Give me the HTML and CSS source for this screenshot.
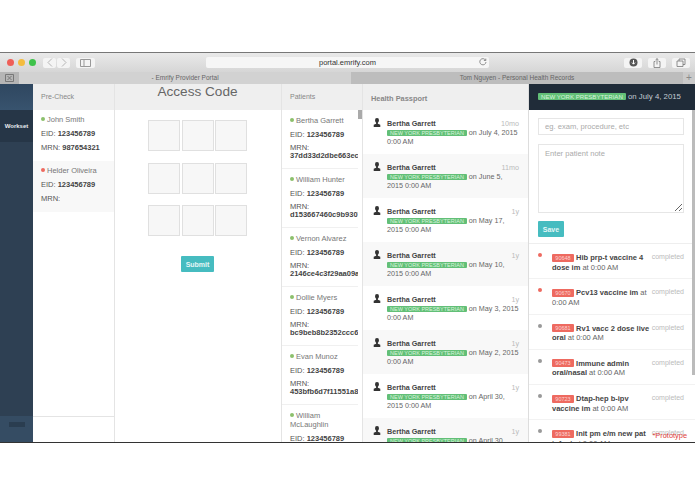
FILE: index.html
```html
<!DOCTYPE html>
<html lang="en">
<head>
  <meta charset="UTF-8" />
  <title>Emrify Provider Portal</title>
  <link rel="stylesheet" href="styles.css">
</head>
<body>
  <div class="window">
    <div class="toolbar">
      <div class="lights">
        <span class="light red"></span>
        <span class="light yellow"></span>
        <span class="light green"></span>
      </div>
      <div class="nav-btns">
        <span class="tool-btn nav-btn">
          <svg width="6" height="9" viewBox="0 0 6 9"><path d="M5 .5 1 4.500 5 8.500" fill="none" stroke="#b5b5b5"/></svg>
        </span>
        <span class="tool-btn nav-btn">
          <svg width="6" height="9" viewBox="0 0 6 9"><path d="M1 .5 5 4.500 1 8.500" fill="none" stroke="#b5b5b5"/></svg>
        </span>
      </div>
      <span class="tool-btn side-btn">
        <svg width="11" height="8" viewBox="0 0 11 8"><path d="M.5.500h10v7H.5zM4 .5v7" fill="none" stroke="#999"/></svg>
      </span>
      <div class="address">
        <span class="url">portal.emrify.com</span>
        <svg class="reload" width="8" height="8" viewBox="0 0 8 8"><path d="M6.600 2.200A3.100 3.100 0 1 0 7 4M6.800.6v1.900H4.900" fill="none" stroke="#777" stroke-width=".8"/></svg>
      </div>
      <div class="tool-right">
        <span class="tool-btn right-btn">
          <svg width="9" height="9" viewBox="0 0 9 9"><circle cx="4.500" cy="4.500" r="4" fill="#555"/><path d="M4.500 2v4M3 4.600l1.500 1.600L6 4.600" fill="none" stroke="#fff"/></svg>
        </span>
        <span class="tool-btn right-btn">
          <svg width="8" height="10" viewBox="0 0 8 10"><path d="M2.300 3.500H1v6h6v-6H5.700M4 6.500V.7M2.500 2 4 .6 5.500 2" fill="none" stroke="#777" stroke-width=".8"/></svg>
        </span>
        <span class="tool-btn right-btn">
          <svg width="10" height="9" viewBox="0 0 10 9"><path d="M1 3h6v5.500H1zM3 3V1h6v5.500H7" fill="none" stroke="#777" stroke-width=".8"/></svg>
        </span>
      </div>
    </div>

    <div class="tabbar">
      <span class="tab-icon">
        <svg width="9" height="8" viewBox="0 0 9 8"><path d="M.5.500h8v7h-8zM2.500 2l4 4M6.500 2l-4 4" fill="none" stroke="#777"/></svg>
      </span>
      <span class="tab tab-active">- Emrify Provider Portal</span>
      <span class="tab">Tom Nguyen - Personal Health Records</span>
      <span class="tab-plus">+</span>
    </div>

    <div class="app">
      <div class="sidebar">
        <div class="side-top"></div>
        <div class="side-item">Workset</div>
        <div class="side-fill"></div>
        <div class="side-bottom"><span class="side-block"></span></div>
      </div>

      <div class="col precheck">
        <div class="col-head">Pre-Check</div>
        <div class="col-body">
          <div class="person">
            <div class="p-name"><span class="dot green-dot"></span>John Smith</div>
            <div class="p-line">EID: <b>123456789</b></div>
            <div class="p-line">MRN: <b>987654321</b></div>
          </div>
          <div class="person shaded">
            <div class="p-name"><span class="dot red-dot"></span>Helder Oliveira</div>
            <div class="p-line">EID: <b>123456789</b></div>
            <div class="p-line">MRN:</div>
          </div>
        </div>
        <div class="col-foot"></div>
      </div>

      <div class="col access">
        <div class="col-head access-head">Access Code</div>
        <div class="code-grid">
          <span class="code-box"></span><span class="code-box"></span><span class="code-box"></span>
          <span class="code-box"></span><span class="code-box"></span><span class="code-box"></span>
          <span class="code-box"></span><span class="code-box"></span><span class="code-box"></span>
        </div>
        <button class="btn submit-btn">Submit</button>
      </div>

      <div class="col patients">
        <div class="col-head">Patients</div>
        <div class="patient-list">
          <div class="patient">
            <div class="p-name"><span class="dot green-dot"></span>Bertha Garrett</div>
            <div class="p-line">EID: <b>123456789</b></div>
            <div class="p-mrn">MRN:<br><b>37dd33d2dbe663ecd92a</b></div>
          </div>
          <div class="patient">
            <div class="p-name"><span class="dot green-dot"></span>William Hunter</div>
            <div class="p-line">EID: <b>123456789</b></div>
            <div class="p-mrn">MRN:<br><b>d153667460c9b93077aa</b></div>
          </div>
          <div class="patient">
            <div class="p-name"><span class="dot green-dot"></span>Vernon Alvarez</div>
            <div class="p-line">EID: <b>123456789</b></div>
            <div class="p-mrn">MRN:<br><b>2146ce4c3f29aa09a1bc</b></div>
          </div>
          <div class="patient">
            <div class="p-name"><span class="dot green-dot"></span>Dollie Myers</div>
            <div class="p-line">EID: <b>123456789</b></div>
            <div class="p-mrn">MRN:<br><b>bc9beb8b2352ccc6d01f</b></div>
          </div>
          <div class="patient">
            <div class="p-name"><span class="dot green-dot"></span>Evan Munoz</div>
            <div class="p-line">EID: <b>123456789</b></div>
            <div class="p-mrn">MRN:<br><b>453bfb6d7f11551a8e20</b></div>
          </div>
          <div class="patient">
            <div class="p-name"><span class="dot green-dot"></span>William<br>McLaughlin</div>
            <div class="p-line">EID: <b>123456789</b></div>
          </div>
        </div>
        <span class="thumb"></span>
      </div>

      <div class="col passport">
        <div class="col-head passport-head">Health Passport</div>
        <div class="visit">
          <svg class="avatar" width="8" height="9" viewBox="0 0 9 10"><path d="M4.500 0a2.200 2.200 0 0 1 2.200 2.400c0 1.200-.6 2.300-1.200 2.800v1.100l2.700 1.300V10H.8V7.600l2.700-1.300V5.200C2.900 4.700 2.300 3.600 2.300 2.400A2.200 2.200 0 0 1 4.500 0z" fill="#333"/></svg>
          <div class="visit-text">
            <div class="visit-top"><b>Bertha Garrett</b><span class="ago">10mo</span></div>
            <span class="badge green-badge">NEW YORK PRESBYTERIAN</span> on July 4, 2015 0:00 AM
          </div>
        </div>
        <div class="visit shaded">
          <svg class="avatar" width="8" height="9" viewBox="0 0 9 10"><path d="M4.500 0a2.200 2.200 0 0 1 2.200 2.400c0 1.200-.6 2.300-1.200 2.800v1.100l2.700 1.300V10H.8V7.600l2.700-1.300V5.200C2.900 4.700 2.300 3.600 2.300 2.400A2.200 2.200 0 0 1 4.500 0z" fill="#333"/></svg>
          <div class="visit-text">
            <div class="visit-top"><b>Bertha Garrett</b><span class="ago">11mo</span></div>
            <span class="badge green-badge">NEW YORK PRESBYTERIAN</span> on June 5, 2015 0:00 AM
          </div>
        </div>
        <div class="visit">
          <svg class="avatar" width="8" height="9" viewBox="0 0 9 10"><path d="M4.500 0a2.200 2.200 0 0 1 2.200 2.400c0 1.200-.6 2.300-1.200 2.800v1.100l2.700 1.300V10H.8V7.600l2.700-1.300V5.200C2.900 4.700 2.300 3.600 2.300 2.400A2.200 2.200 0 0 1 4.500 0z" fill="#333"/></svg>
          <div class="visit-text">
            <div class="visit-top"><b>Bertha Garrett</b><span class="ago">1y</span></div>
            <span class="badge green-badge">NEW YORK PRESBYTERIAN</span> on May 17, 2015 0:00 AM
          </div>
        </div>
        <div class="visit shaded">
          <svg class="avatar" width="8" height="9" viewBox="0 0 9 10"><path d="M4.500 0a2.200 2.200 0 0 1 2.200 2.400c0 1.200-.6 2.300-1.200 2.800v1.100l2.700 1.300V10H.8V7.600l2.700-1.300V5.200C2.900 4.700 2.300 3.600 2.300 2.400A2.200 2.200 0 0 1 4.500 0z" fill="#333"/></svg>
          <div class="visit-text">
            <div class="visit-top"><b>Bertha Garrett</b><span class="ago">1y</span></div>
            <span class="badge green-badge">NEW YORK PRESBYTERIAN</span> on May 10, 2015 0:00 AM
          </div>
        </div>
        <div class="visit">
          <svg class="avatar" width="8" height="9" viewBox="0 0 9 10"><path d="M4.500 0a2.200 2.200 0 0 1 2.200 2.400c0 1.200-.6 2.300-1.200 2.800v1.100l2.700 1.300V10H.8V7.600l2.700-1.300V5.200C2.900 4.700 2.300 3.600 2.300 2.400A2.200 2.200 0 0 1 4.500 0z" fill="#333"/></svg>
          <div class="visit-text">
            <div class="visit-top"><b>Bertha Garrett</b><span class="ago">1y</span></div>
            <span class="badge green-badge">NEW YORK PRESBYTERIAN</span> on May 3, 2015 0:00 AM
          </div>
        </div>
        <div class="visit shaded">
          <svg class="avatar" width="8" height="9" viewBox="0 0 9 10"><path d="M4.500 0a2.200 2.200 0 0 1 2.200 2.400c0 1.200-.6 2.300-1.200 2.800v1.100l2.700 1.300V10H.8V7.600l2.700-1.300V5.200C2.900 4.700 2.300 3.600 2.300 2.400A2.200 2.200 0 0 1 4.500 0z" fill="#333"/></svg>
          <div class="visit-text">
            <div class="visit-top"><b>Bertha Garrett</b><span class="ago">1y</span></div>
            <span class="badge green-badge">NEW YORK PRESBYTERIAN</span> on May 2, 2015 0:00 AM
          </div>
        </div>
        <div class="visit">
          <svg class="avatar" width="8" height="9" viewBox="0 0 9 10"><path d="M4.500 0a2.200 2.200 0 0 1 2.200 2.400c0 1.200-.6 2.300-1.200 2.800v1.100l2.700 1.300V10H.8V7.600l2.700-1.300V5.200C2.900 4.700 2.300 3.600 2.300 2.400A2.200 2.200 0 0 1 4.500 0z" fill="#333"/></svg>
          <div class="visit-text">
            <div class="visit-top"><b>Bertha Garrett</b><span class="ago">1y</span></div>
            <span class="badge green-badge">NEW YORK PRESBYTERIAN</span> on April 30, 2015 0:00 AM
          </div>
        </div>
        <div class="visit shaded">
          <svg class="avatar" width="8" height="9" viewBox="0 0 9 10"><path d="M4.500 0a2.200 2.200 0 0 1 2.200 2.400c0 1.200-.6 2.300-1.200 2.800v1.100l2.700 1.300V10H.8V7.600l2.700-1.300V5.200C2.900 4.700 2.300 3.600 2.300 2.400A2.200 2.200 0 0 1 4.500 0z" fill="#333"/></svg>
          <div class="visit-text">
            <div class="visit-top"><b>Bertha Garrett</b><span class="ago">1y</span></div>
            <span class="badge green-badge">NEW YORK PRESBYTERIAN</span> on April 30, 2015 0:00 AM
          </div>
        </div>
      </div>

      <div class="col detail">
        <div class="detail-head"><span class="badge green-badge">NEW YORK PRESBYTERIAN</span> on July 4, 2015</div>
        <div class="note-form">
          <input class="field" type="text" placeholder="eg. exam, procedure, etc">
          <textarea class="field note" placeholder="Enter patient note"></textarea>
          <button class="btn save-btn">Save</button>
        </div>
        <div class="order">
          <span class="dot order-dot red-dot"></span>
          <div class="order-text"><span class="badge red-badge">90648</span> <b>Hib prp-t vaccine 4 dose im</b> at 0:00 AM</div>
          <span class="status">completed</span>
        </div>
        <div class="order">
          <span class="dot order-dot red-dot"></span>
          <div class="order-text"><span class="badge red-badge">90670</span> <b>Pcv13 vaccine im</b> at 0:00 AM</div>
          <span class="status">completed</span>
        </div>
        <div class="order">
          <span class="dot order-dot gray-dot"></span>
          <div class="order-text"><span class="badge red-badge">90681</span> <b>Rv1 vacc 2 dose live oral</b> at 0:00 AM</div>
          <span class="status">completed</span>
        </div>
        <div class="order">
          <span class="dot order-dot gray-dot"></span>
          <div class="order-text"><span class="badge red-badge">90473</span> <b>Immune admin oral/nasal</b> at 0:00 AM</div>
          <span class="status">completed</span>
        </div>
        <div class="order">
          <span class="dot order-dot gray-dot"></span>
          <div class="order-text"><span class="badge red-badge">90723</span> <b>Dtap-hep b-ipv vaccine im</b> at 0:00 AM</div>
          <span class="status">completed</span>
        </div>
        <div class="order">
          <span class="dot order-dot gray-dot"></span>
          <div class="order-text"><span class="badge red-badge">99381</span> <b>Init pm e/m new pat infant</b> at 0:00 AM</div>
          <span class="status">completed</span>
        </div>
        <span class="detail-scroll"></span>
      </div>

      <span class="prototype">*Prototype</span>
    </div>
  </div>
</body>
</html>
```

FILE: styles.css
```css
* { box-sizing: border-box; }
body {
  margin: 0;
  padding-top: 52px;
  height: 494px;
  overflow: hidden;
  background: #fff;
  font-family: "Liberation Sans", Arial, sans-serif;
  font-size: 7.5px;
  color: #666;
}
b { color: #444; }
.window {
  height: 391px;
  display: flex;
  flex-direction: column;
  border-top: 1px solid #777;
  border-bottom: 1px solid #333;
  overflow: hidden;
}

/* browser chrome */
.toolbar {
  height: 19px;
  flex: none;
  display: flex;
  align-items: center;
  padding-left: 7px;
  background: linear-gradient(#e9e9e9, #d6d6d6);
}
.lights { display: flex; gap: 4px; width: 36px; }
.light { width: 7px; height: 7px; border-radius: 50%; }
.red { background: #ef5f58; }
.yellow { background: #f4bc3f; }
.green { background: #3ec24a; }
.tool-btn {
  display: flex;
  align-items: center;
  justify-content: center;
  height: 10px;
  background: #f4f4f4;
  border-radius: 2px;
}
.nav-btns { display: flex; gap: 1px; width: 33px; }
.nav-btn { width: 13px; }
.side-btn { width: 19px; }
.address {
  position: relative;
  width: 283px;
  height: 11px;
  margin-left: 111px;
  background: #f6f6f6;
  border-radius: 2px;
  text-align: center;
  line-height: 11px;
  color: #333;
}
.reload { position: absolute; right: 2px; top: 1px; }
.tool-right { display: flex; gap: 6px; margin-left: 135px; }
.right-btn { width: 18px; }
.tabbar {
  height: 12px;
  flex: none;
  display: flex;
  background: #bdbdbd;
  font-size: 6.500px;
  line-height: 12px;
  color: #666;
  text-align: center;
}
.tab-icon {
  width: 19px;
  display: flex;
  align-items: center;
  justify-content: center;
  background: #b5b5b5;
}
.tab { width: 332px; }
.tab-active { background: #d2d2d2; }
.tab-plus {
  flex: 1;
  background: #cacaca;
  font-size: 10px;
  color: #888;
}

/* app columns */
.app {
  position: relative;
  flex: 1;
  display: flex;
  min-height: 0;
}
.sidebar {
  width: 33px;
  flex: none;
  display: flex;
  flex-direction: column;
  background: #2e4053;
}
.side-top { height: 26px; background: linear-gradient(#2f4760, #38536e); }
.side-item {
  height: 32px;
  display: flex;
  align-items: center;
  justify-content: center;
  font-size: 6px;
  font-weight: bold;
  color: #e8edf0;
  background: #263647;
}
.side-fill { flex: 1; }
.side-bottom {
  height: 26px;
  display: flex;
  justify-content: center;
  padding-top: 6px;
  background: #354c63;
}
.side-block { width: 16px; height: 5px; background: #2a3d50; }
.col {
  position: relative;
  display: flex;
  flex-direction: column;
  border-right: 1px solid #e4e4e4;
  overflow: hidden;
}
.col-head {
  height: 26px;
  flex: none;
  padding: 0 8px;
  line-height: 25px;
  background: #efefef;
  color: #888;
  font-size: 7px;
}
.precheck { width: 82px; }
.col-body { flex: 1; }
.col-foot { height: 26px; border-top: 1px solid #e4e4e4; }
.person { height: 51px; padding: 5px 8px; }
.shaded { background: #f8f8f8; }
.p-name { line-height: 9px; color: #777; margin-bottom: 5px; }
.p-line { line-height: 9px; margin-bottom: 4.500px; color: #555; }
.dot {
  display: inline-block;
  width: 4px;
  height: 4px;
  border-radius: 50%;
  margin-right: 2px;
  vertical-align: 1px;
}
.green-dot { background: #8cc06c; }
.red-dot { background: #ee6a60; }
.gray-dot { background: #999; }

.access { width: 167px; align-items: center; padding-right: 1px; }
.access-head {
  width: 167px;
  flex: none;
  text-align: center;
  font-size: 13.600px;
  line-height: 16px;
  padding: 0;
  color: #666;
}
.code-grid {
  display: grid;
  grid-template-columns: repeat(3, 32px);
  grid-auto-rows: 31px;
  column-gap: 1.500px;
  row-gap: 11.500px;
  margin-top: 10px;
}
.code-box { border: 1px solid #e0e0e0; background: #f7f7f7; }
.btn {
  border: none;
  border-radius: 1px;
  background: #46bcc0;
  color: #e4f6f6;
  font-family: inherit;
  font-size: 7px;
  font-weight: bold;
  padding: 0;
}
.submit-btn { width: 33px; height: 16px; margin-top: 20px; }

.patients { width: 80px; border-right: none; }
.patient-list { flex: 1; padding-right: 4px; }
.patient {
  height: 59px;
  padding: 6px 0 0 8px;
  border-bottom: 1px solid #f0f0f0;
  overflow: hidden;
  white-space: nowrap;
}
.p-mrn { line-height: 8.500px; color: #555; }
.thumb {
  position: absolute;
  right: 0;
  top: 26px;
  width: 4px;
  height: 9px;
  background: #aaa;
}

.passport {
  width: 167px;
  border-left: 1px solid #e4e4e4;
  border-right: 1px solid #ddd;
}
.passport-head { font-weight: bold; color: #888; font-size: 7.400px; padding: 2px 8px 0; }
.visit {
  height: 44px;
  flex: none;
  display: flex;
  padding: 9px 9px 0 10px;
  font-size: 7.200px;
}
.avatar { flex: none; margin: -1px 6px 0 0; }
.visit-text { flex: 1; line-height: 9.200px; color: #666; }
.visit-top { display: flex; justify-content: space-between; }
.ago { color: #bbb; }
.badge {
  display: inline-block;
  padding: 0 3px;
  border-radius: 1px;
  color: #d8f5dc;
  font-size: 5.500px;
  line-height: 6px;
  vertical-align: 0.5px;
}
.green-badge { background: #62bf77; }
.red-badge {
  width: 22px;
  padding: 1px 0;
  text-align: center;
  background: #ee6a60;
  color: #fbd5d2;
}

.detail { flex: 1; border-right: none; }
.detail-head {
  height: 26px;
  flex: none;
  padding: 0 9px;
  line-height: 25px;
  background: #202c39;
  color: #c2cad1;
  font-size: 7.800px;
}
.detail-head .badge { font-size: 6.100px; line-height: 7px; }
.note-form {
  flex: none;
  height: 134px;
  padding: 8px 11px 0 9px;
  display: flex;
  flex-direction: column;
  border-bottom: 1px solid #eee;
}
.field {
  display: block;
  width: 100%;
  height: 17px;
  padding: 0 6px;
  border: 1px solid #e6e6e6;
  border-radius: 0;
  font-family: inherit;
  font-size: 7.600px;
  background: #fff;
  outline: none;
}
.field::placeholder { color: #aaa; }
.note { height: 69px; margin-top: 9px; padding-top: 4px; }
.save-btn { width: 26px; height: 16px; margin-top: 8px; }
.order {
  height: 35.300px;
  flex: none;
  display: flex;
  align-items: flex-start;
  padding: 9px 11px 0 9px;
  border-bottom: 1px solid #f2f2f2;
}
.order-dot { flex: none; margin: 0 10px 0 0; }
.order-text { flex: 1; line-height: 9.500px; color: #666; }
.status { flex: none; margin-left: 2px; color: #bbb; font-size: 7px; }
.detail-scroll {
  position: absolute;
  right: 0;
  top: 26px;
  width: 3px;
  height: 265px;
  background: #bbb;
}
.prototype {
  position: absolute;
  right: 8px;
  bottom: 2px;
  color: #e0403a;
  font-size: 7.400px;
}
```
